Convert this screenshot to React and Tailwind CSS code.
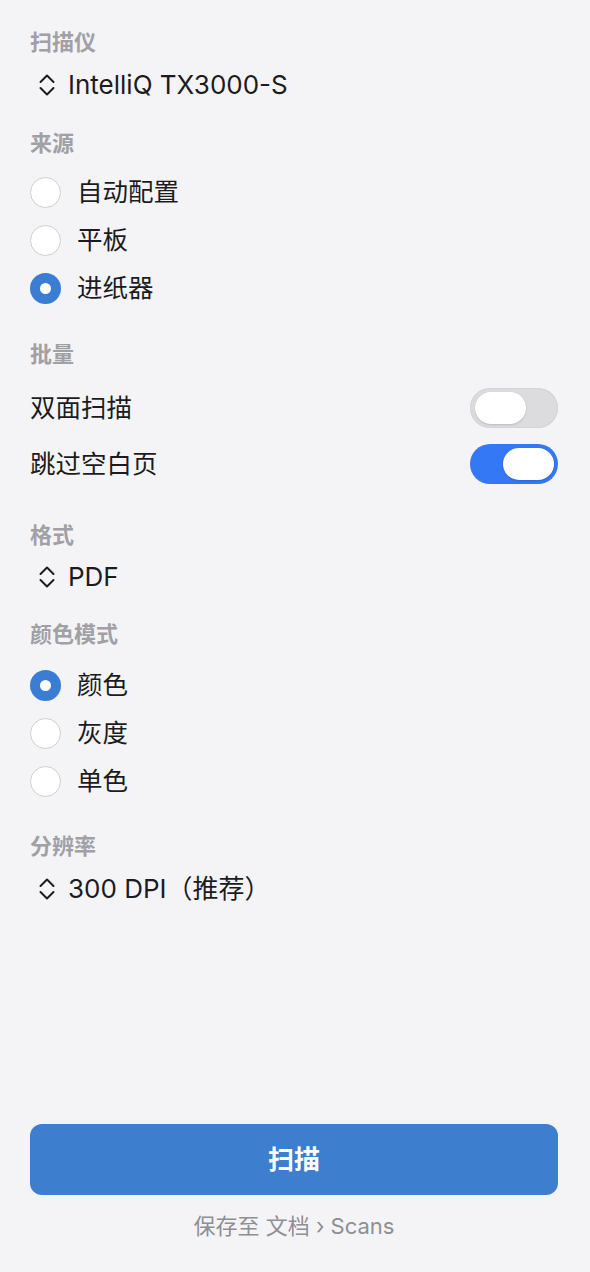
import React from "react";

const FONT = { fontFamily: '"Inter", "Noto Sans CJK SC", sans-serif' };

function Chevrons() {
  return (
    <svg width="18" height="24" viewBox="0 0 18 24" fill="none" stroke="#1c1c1e" strokeWidth="2" strokeLinecap="round" strokeLinejoin="round">
      <path d="M2.5 9 L9 2.5 L15.5 9" />
      <path d="M2.5 15 L9 21.5 L15.5 15" />
    </svg>
  );
}

function Header({ children, className = "" }) {
  return (
    <div className={`h-[24px] flex items-center text-[22px] font-bold text-[#a0a0a5] leading-none ${className}`}>
      {children}
    </div>
  );
}

function Popup({ children, className = "" }) {
  return (
    <div className={`h-[34px] flex items-center gap-[12px] pl-[8px] ${className}`}>
      <Chevrons />
      <span className="text-[26px] text-[#1c1c1e] leading-none">{children}</span>
    </div>
  );
}

function Radio({ label, checked }) {
  return (
    <div className="h-[48px] flex items-center gap-[16px]">
      {checked ? (
        <div className="w-[31px] h-[31px] rounded-full bg-[#3b7dd3] flex items-center justify-center">
          <div className="w-[11px] h-[11px] rounded-full bg-white" />
        </div>
      ) : (
        <div className="w-[31px] h-[31px] rounded-full bg-white border border-[#cfcfd3]" />
      )}
      <span className="text-[25.5px] text-[#1c1c1e] leading-none">{label}</span>
    </div>
  );
}

function Toggle({ on }) {
  return on ? (
    <div className="w-[88px] h-[40px] rounded-full bg-[#3478f6] flex items-center justify-end pr-[4px]">
      <div className="w-[51px] h-[32px] rounded-full bg-white shadow-[0_1px_2px_rgba(0,0,0,0.15)]" />
    </div>
  ) : (
    <div className="w-[88px] h-[40px] rounded-full bg-[#dcdcdf] shadow-[inset_0_0_2px_rgba(0,0,0,0.12)] flex items-center pl-[5px]">
      <div className="w-[51px] h-[32px] rounded-full bg-white shadow-[0_1px_2px_rgba(0,0,0,0.15)]" />
    </div>
  );
}

function ToggleRow({ label, on }) {
  return (
    <div className="h-[56px] flex items-center justify-between">
      <span className="text-[25.5px] text-[#1c1c1e] leading-none">{label}</span>
      <Toggle on={on} />
    </div>
  );
}

export default function App() {
  return (
    <div className="min-h-screen h-[1272px] bg-[#f4f4f7] flex flex-col pl-[30px] pr-[32px] pt-[30px]" style={FONT}>
      <Header>扫描仪</Header>
      <Popup className="mt-[14px]">IntelliQ TX3000-S</Popup>

      <Header className="mt-[29px]">来源</Header>
      <div className="mt-[13px] flex flex-col">
        <Radio label="自动配置" />
        <Radio label="平板" />
        <Radio label="进纸器" checked />
      </div>

      <Header className="mt-[30px]">批量</Header>
      <div className="mt-[14px] flex flex-col">
        <ToggleRow label="双面扫描" />
        <ToggleRow label="跳过空白页" on />
      </div>

      <Header className="mt-[31px]">格式</Header>
      <Popup className="mt-[13px]">PDF</Popup>

      <Header className="mt-[28px]">颜色模式</Header>
      <div className="mt-[15px] flex flex-col">
        <Radio label="颜色" checked />
        <Radio label="灰度" />
        <Radio label="单色" />
      </div>

      <Header className="mt-[29px]">分辨率</Header>
      <Popup className="mt-[14px]">300 DPI（推荐）</Popup>

      <div className="mt-auto flex flex-col items-stretch pb-[34px]">
        <button className="h-[71px] rounded-[12px] bg-[#3d7ecf] text-white text-[26px] font-bold flex items-center justify-center">
          扫描
        </button>
        <div className="mt-[19px] h-[24px] flex items-center justify-center text-[22px] text-[#8e8e93] leading-none">
          保存至 文档 › Scans
        </div>
      </div>
    </div>
  );
}
